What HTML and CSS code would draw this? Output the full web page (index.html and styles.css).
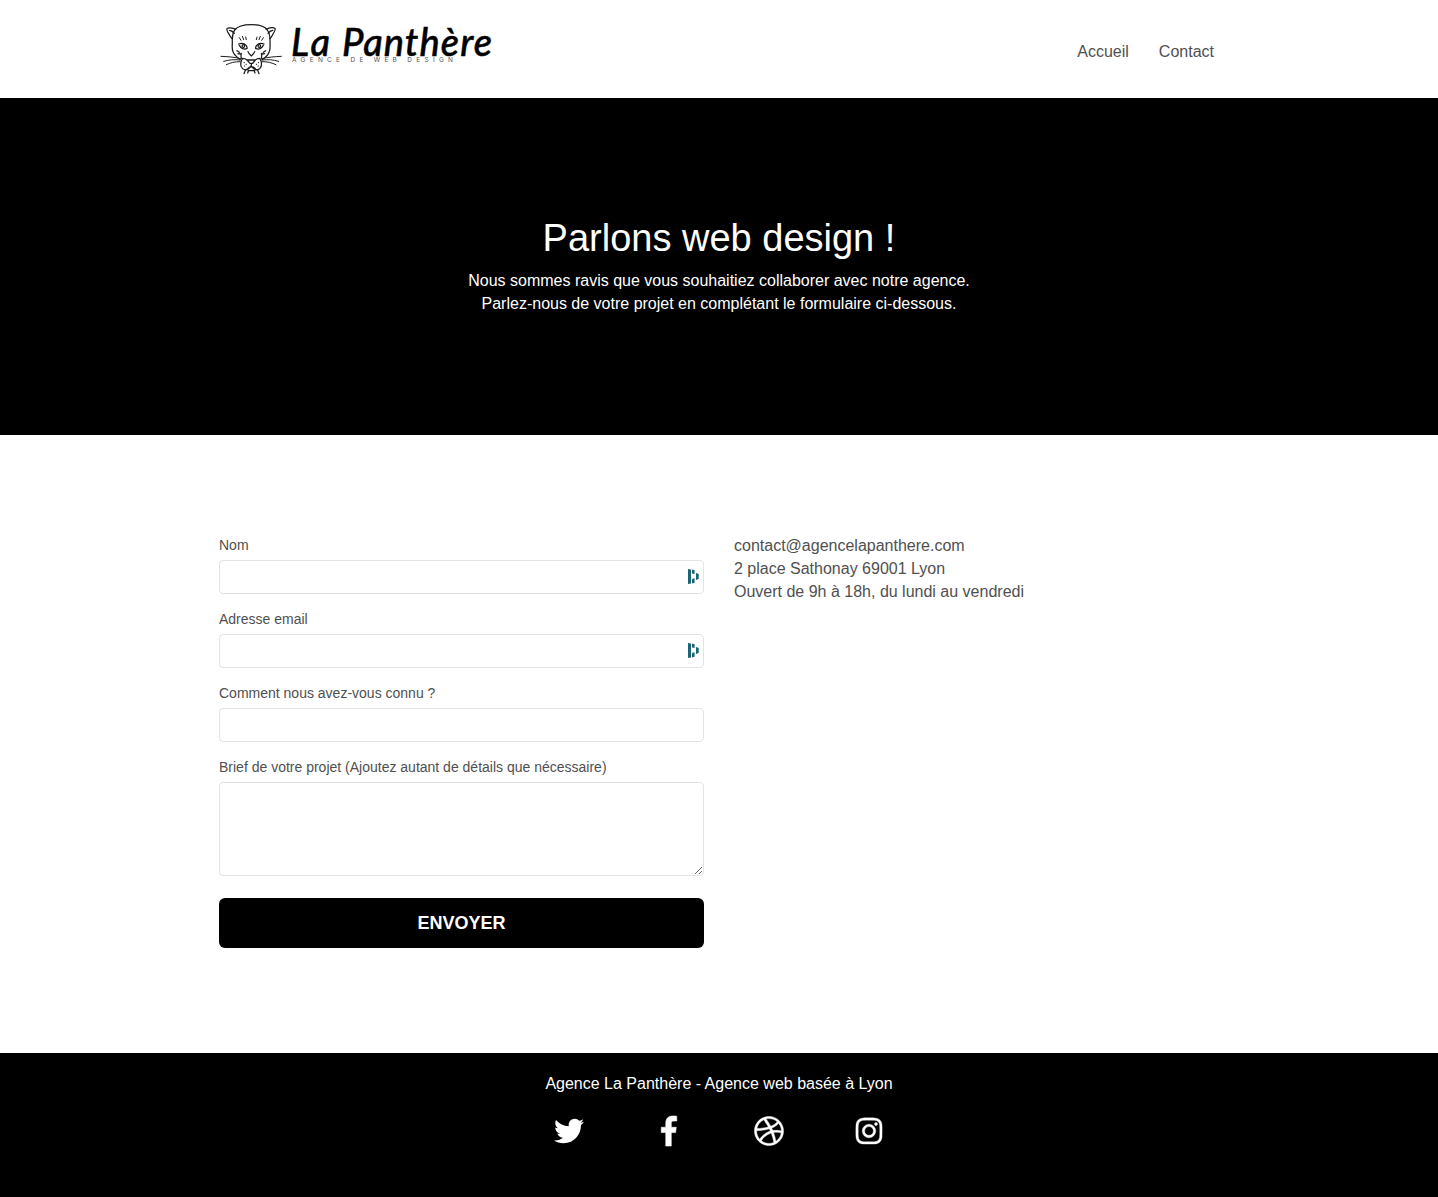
FILE: index.html
```html
<!DOCTYPE html>
<html lang="fr">
<head>
<meta charset="utf-8">
<title>Contact - La Panthère</title>
<link rel="stylesheet" href="styles.css">
</head>
<body>
<header class="site-header container">
  <a class="logo" href="#" aria-label="La Panthère">
    <svg width="276" height="56" viewBox="0 0 276 56">
      <g transform="translate(-7 -6) scale(.33333)" fill="none" stroke="#1c1c1c" stroke-width="3.800" stroke-linecap="round" stroke-linejoin="round">
        <path d="M68 42C78 29 94 26 118 26s39 4 48 16M68 42C62 51 60 62 61 78c0 12-2 20 2 29 4 12 12 17 22 24M166 42c7 10 9 21 8 37 0 12 2 21-3 30-4 11-12 17-21 22"/>
        <path d="M71 40C61 35 49 34 45 38c-2 4 3 12 7 18 3 6 6 10 9 12M163 40c10-6 22-7 26-3 3 4-3 13-7 19-3 6-6 10-9 12M53 43c6 1 11 5 14 9M182 43c-6 1-11 5-14 9"/>
        <path stroke-width="3" d="M82 65l5 8M91 61l4 10M101 63l2 8M154 65l-5 8M145 61l-4 10M135 63l-2 8"/>
        <path d="M80 84c8-3 17-2 22 4 3 4 4 7 3 10M156 84c-8-3-17-2-22 4-3 4-4 7-3 10M82 88c4 10 15 14 23 9M154 88c-4 10-15 14-23 9"/>
        <circle cx="94" cy="90" r="4"/><circle cx="142" cy="90" r="4"/>
        <path d="M108 107c2 7 7 8 10 13 3-5 8-6 10-13M75 104l7 5M161 104l-7 5M78 113l8 1M158 113l-8 1M105 132h25l-8 10h-8zM118 142v8M88 112c-2 6-1 10 0 15M148 112c2 6 1 10 0 15M92 127c-8 10-8 26 1 32 10 5 18 1 24-9 7 10 17 14 26 8 8-7 7-22 0-31M105 132c-4-4-9-5-13-5M130 132c4-4 9-5 13-5M107 158c7-7 16-7 23 0M100 163l-4 10M110 163l-3 8M126 163l3 8M137 163l4 10M108 164h20"/>
        <path stroke-width="3" d="M86 128c-20-5-38-6-59-7M84 132c-18-2-31-1-49 4M84 137c-16 0-28 3-41 9M150 128c20-5 38-6 58-7M151 132c18-2 31-1 49 4M151 137c16 0 28 3 41 9M96 140h1M102 145h1M97 150h1M139 140h1M133 145h1M138 150h1"/>
      </g>
      <text class="logo-name" x="72" y="34" textLength="39" lengthAdjust="spacing">La</text>
      <text class="logo-name" x="123" y="34" textLength="150" lengthAdjust="spacing">Panthère</text>
      <text class="logo-tagline" x="73" y="40.300" textLength="161">AGENCE DE WEB DESIGN</text>
    </svg>
  </a>
  <nav class="site-nav"><a href="#">Accueil</a><a href="#">Contact</a></nav>
</header>
<section class="hero">
  <h1>Parlons web design !</h1>
  <p>Nous sommes ravis que vous souhaitiez collaborer avec notre agence.<br>Parlez-nous de votre projet en complétant le formulaire ci-dessous.</p>
</section>
<main class="contact container">
  <form class="contact-form">
    <label for="name">Nom</label>
    <div class="field">
      <input id="name" type="text">
      <svg class="field-icon" width="11" height="15" viewBox="0 0 11 15" fill="#1c6573"><path d="M0 0l3 .5v14L0 15zM4 .5l2.600.700V5L4 4.500zM4 10l2.600-.700v4.500L4 14.500zM8 4l2.700 1v5L8 11z"/></svg>
    </div>
    <label for="email">Adresse email</label>
    <div class="field">
      <input id="email" type="text">
      <svg class="field-icon" width="11" height="15" viewBox="0 0 11 15" fill="#1c6573"><path d="M0 0l3 .5v14L0 15zM4 .5l2.600.700V5L4 4.500zM4 10l2.600-.700v4.500L4 14.500zM8 4l2.700 1v5L8 11z"/></svg>
    </div>
    <label for="source">Comment nous avez-vous connu ?</label>
    <div class="field"><input id="source" type="text"></div>
    <label for="brief">Brief de votre projet (Ajoutez autant de détails que nécessaire)</label>
    <textarea id="brief"></textarea>
    <button type="button">ENVOYER</button>
  </form>
  <address>contact@agencelapanthere.com<br>2 place Sathonay 69001 Lyon<br>Ouvert de 9h à 18h, du lundi au vendredi</address>
</main>
<footer class="site-footer">
  <p>Agence La Panthère - Agence web basée à Lyon</p>
  <div class="social">
    <a href="#" aria-label="Twitter"><svg viewBox="0 0 512 512"><path d="M459.37 151.716c.325 4.548.325 9.097.325 13.645 0 138.72-105.583 298.558-298.558 298.558-59.452 0-114.68-17.219-161.137-47.106 8.447.974 16.568 1.299 25.34 1.299 49.055 0 94.213-16.568 130.274-44.832-46.132-.975-84.792-31.188-98.112-72.772 6.498.974 12.995 1.624 19.818 1.624 9.421 0 18.843-1.3 27.614-3.573-48.081-9.747-84.143-51.98-84.143-102.985v-1.299c13.969 7.797 30.214 12.67 47.431 13.319-28.264-18.843-46.781-51.005-46.781-87.391 0-19.492 5.197-37.36 14.294-52.954 51.655 63.675 129.3 105.258 216.365 109.807-1.624-7.797-2.599-15.918-2.599-24.04 0-57.828 46.782-104.934 104.934-104.934 30.213 0 57.502 12.67 76.67 33.137 23.715-4.548 46.456-13.32 66.599-25.34-7.798 24.366-24.366 44.833-46.132 57.827 21.117-2.273 41.584-8.122 60.426-16.243-14.292 20.791-32.161 39.308-52.628 54.253z"/></svg></a>
    <a href="#" aria-label="Facebook"><svg viewBox="-124 0 512 512"><path stroke="#fff" stroke-width="10" d="M76.700 512V283H0v-91h76.700v-71.700C76.700 42.400 124.300 0 193.800 0c33.300 0 61.900 2.500 70.200 3.600V85h-48.200c-37.800 0-45.100 18-45.100 44.300V192H256l-11.700 91h-73.600v229z"/></svg></a>
    <a href="#" aria-label="Dribbble"><svg viewBox="0 0 512 512"><path stroke="#fff" stroke-width="8" d="M256 8C119.252 8 8 119.252 8 256s111.252 248 248 248 248-111.252 248-248S392.748 8 256 8zm163.97 114.366c29.503 36.046 47.369 81.957 47.835 131.955-6.984-1.477-77.018-15.682-147.502-6.818-5.752-14.041-11.181-26.393-18.617-41.614 78.321-31.977 113.818-77.482 118.284-83.523zM396.421 97.87c-3.81 5.427-35.697 48.286-111.021 76.519-34.712-63.776-73.185-116.168-79.04-124.008 67.176-16.193 137.966 1.27 190.061 47.489zm-230.48-33.25c5.585 7.659 43.438 60.116 78.537 122.509-99.087 26.313-186.36 25.934-195.834 25.809C62.38 147.205 106.678 92.573 165.941 64.62zM44.17 256.323c0-2.166.043-4.322.108-6.473 9.268.19 111.92 1.513 217.706-30.146 6.064 11.868 11.857 23.915 17.174 35.949-76.599 21.575-146.194 83.527-180.531 142.306C64.794 360.405 44.17 310.73 44.17 256.323zm81.807 167.113c22.127-45.233 82.178-103.622 167.579-132.756 29.74 77.283 42.039 142.053 45.189 160.638-68.112 29.013-150.015 21.053-212.768-27.882zm248.38 8.489c-2.171-12.886-13.446-74.897-41.152-151.033 66.38-10.626 124.7 6.768 131.947 9.055-9.442 58.941-43.273 109.844-90.795 141.978z"/></svg></a>
    <a href="#" aria-label="Instagram"><svg viewBox="-32 0 512 512"><path stroke="#fff" stroke-width="6" d="M224.1 141c-63.6 0-114.9 51.3-114.9 114.9s51.3 114.9 114.9 114.9S339 319.5 339 255.9 287.7 141 224.1 141zm0 189.6c-41.1 0-74.7-33.5-74.7-74.7s33.5-74.7 74.7-74.7 74.7 33.5 74.7 74.7-33.6 74.7-74.7 74.7zm146.4-194.3c0 14.9-12 26.8-26.8 26.8-14.9 0-26.8-12-26.8-26.8s12-26.8 26.8-26.8 26.8 12 26.8 26.8zm76.1 27.2c-1.7-35.9-9.9-67.7-36.2-93.9-26.2-26.2-58-34.4-93.9-36.2-37-2.1-147.900-2.1-184.900 0-35.8 1.7-67.6 9.9-93.9 36.1s-34.4 58-36.2 93.9c-2.1 37-2.1 147.9 0 184.9 1.7 35.9 9.9 67.7 36.2 93.9s58 34.4 93.9 36.2c37 2.1 147.9 2.1 184.9 0 35.9-1.7 67.7-9.9 93.9-36.2 26.2-26.2 34.4-58 36.2-93.9 2.1-37 2.1-147.8 0-184.8zM398.8 388c-7.8 19.6-22.9 34.7-42.6 42.6-29.5 11.7-99.5 9-132.1 9s-102.7 2.6-132.1-9c-19.6-7.8-34.7-22.9-42.6-42.6-11.7-29.5-9-99.5-9-132.1s-2.6-102.7 9-132.1c7.8-19.6 22.9-34.7 42.6-42.6 29.5-11.7 99.5-9 132.1-9s102.7-2.6 132.1 9c19.6 7.8 34.7 22.9 42.6 42.6 11.7 29.5 9 99.5 9 132.1s2.7 102.7-9 132.1z"/></svg></a>
  </div>
</footer>
</body>
</html>
```
FILE: styles.css
```css
* { box-sizing: border-box; }
body {
  margin: 0;
  min-height: 1197px;
  display: flex;
  flex-direction: column;
  background: #fff;
  color: #505050;
  font: 16px/23px "Liberation Sans", Arial, sans-serif;
}
a { color: inherit; text-decoration: none; }
h1, p { margin: 0; }
.container { width: 1000px; margin: 0 auto; }
.site-header {
  height: 98px;
  display: flex;
  justify-content: space-between;
  padding: 22px 5px 0 0;
}
.logo svg { display: block; overflow: visible; }
.logo-name { font: italic 500 38px Lato, sans-serif; fill: #000; stroke: #000; stroke-width: .5px; }
.logo-tagline { font: 6.5px Inter, sans-serif; fill: #555; }
.site-nav { display: flex; gap: 30px; padding-top: 18px; }
.hero {
  height: 337px;
  padding-top: 119px;
  background: #000;
  color: #fff;
  text-align: center;
}
.hero h1 { margin-bottom: 9px; font-size: 38px; line-height: 43px; font-weight: 400; }
.contact {
  height: 618px;
  padding-top: 99px;
  display: grid;
  grid-template-columns: 485px 1fr;
  column-gap: 30px;
  align-items: start;
}
.contact-form { display: flex; flex-direction: column; }
.contact-form label { font-size: 14px; line-height: 20px; margin: 1px 0 5px; }
.field { position: relative; margin-bottom: 14px; }
.field input, .contact-form textarea {
  display: block;
  width: 100%;
  height: 34px;
  border: 1px solid #e3e3e3;
  border-radius: 4px;
  background: #fff;
}
.contact-form textarea { height: 94px; margin-bottom: 22px; resize: vertical; }
.field-icon { position: absolute; right: 5px; top: 9px; }
.contact-form button {
  height: 50px;
  border: 0;
  border-radius: 6px;
  background: #000;
  color: #fff;
  font: bold 18px "Liberation Sans", Arial, sans-serif;
}
.contact address { font-style: normal; }
.site-footer {
  flex: 1;
  padding-top: 19px;
  background: #000;
  color: #fff;
  text-align: center;
}
.social { display: grid; grid-template-columns: repeat(4, 100px); justify-content: center; margin-top: 21px; }
.social a { display: flex; justify-content: center; }
.social svg { width: 30px; height: 30px; fill: #fff; overflow: visible; }
```
